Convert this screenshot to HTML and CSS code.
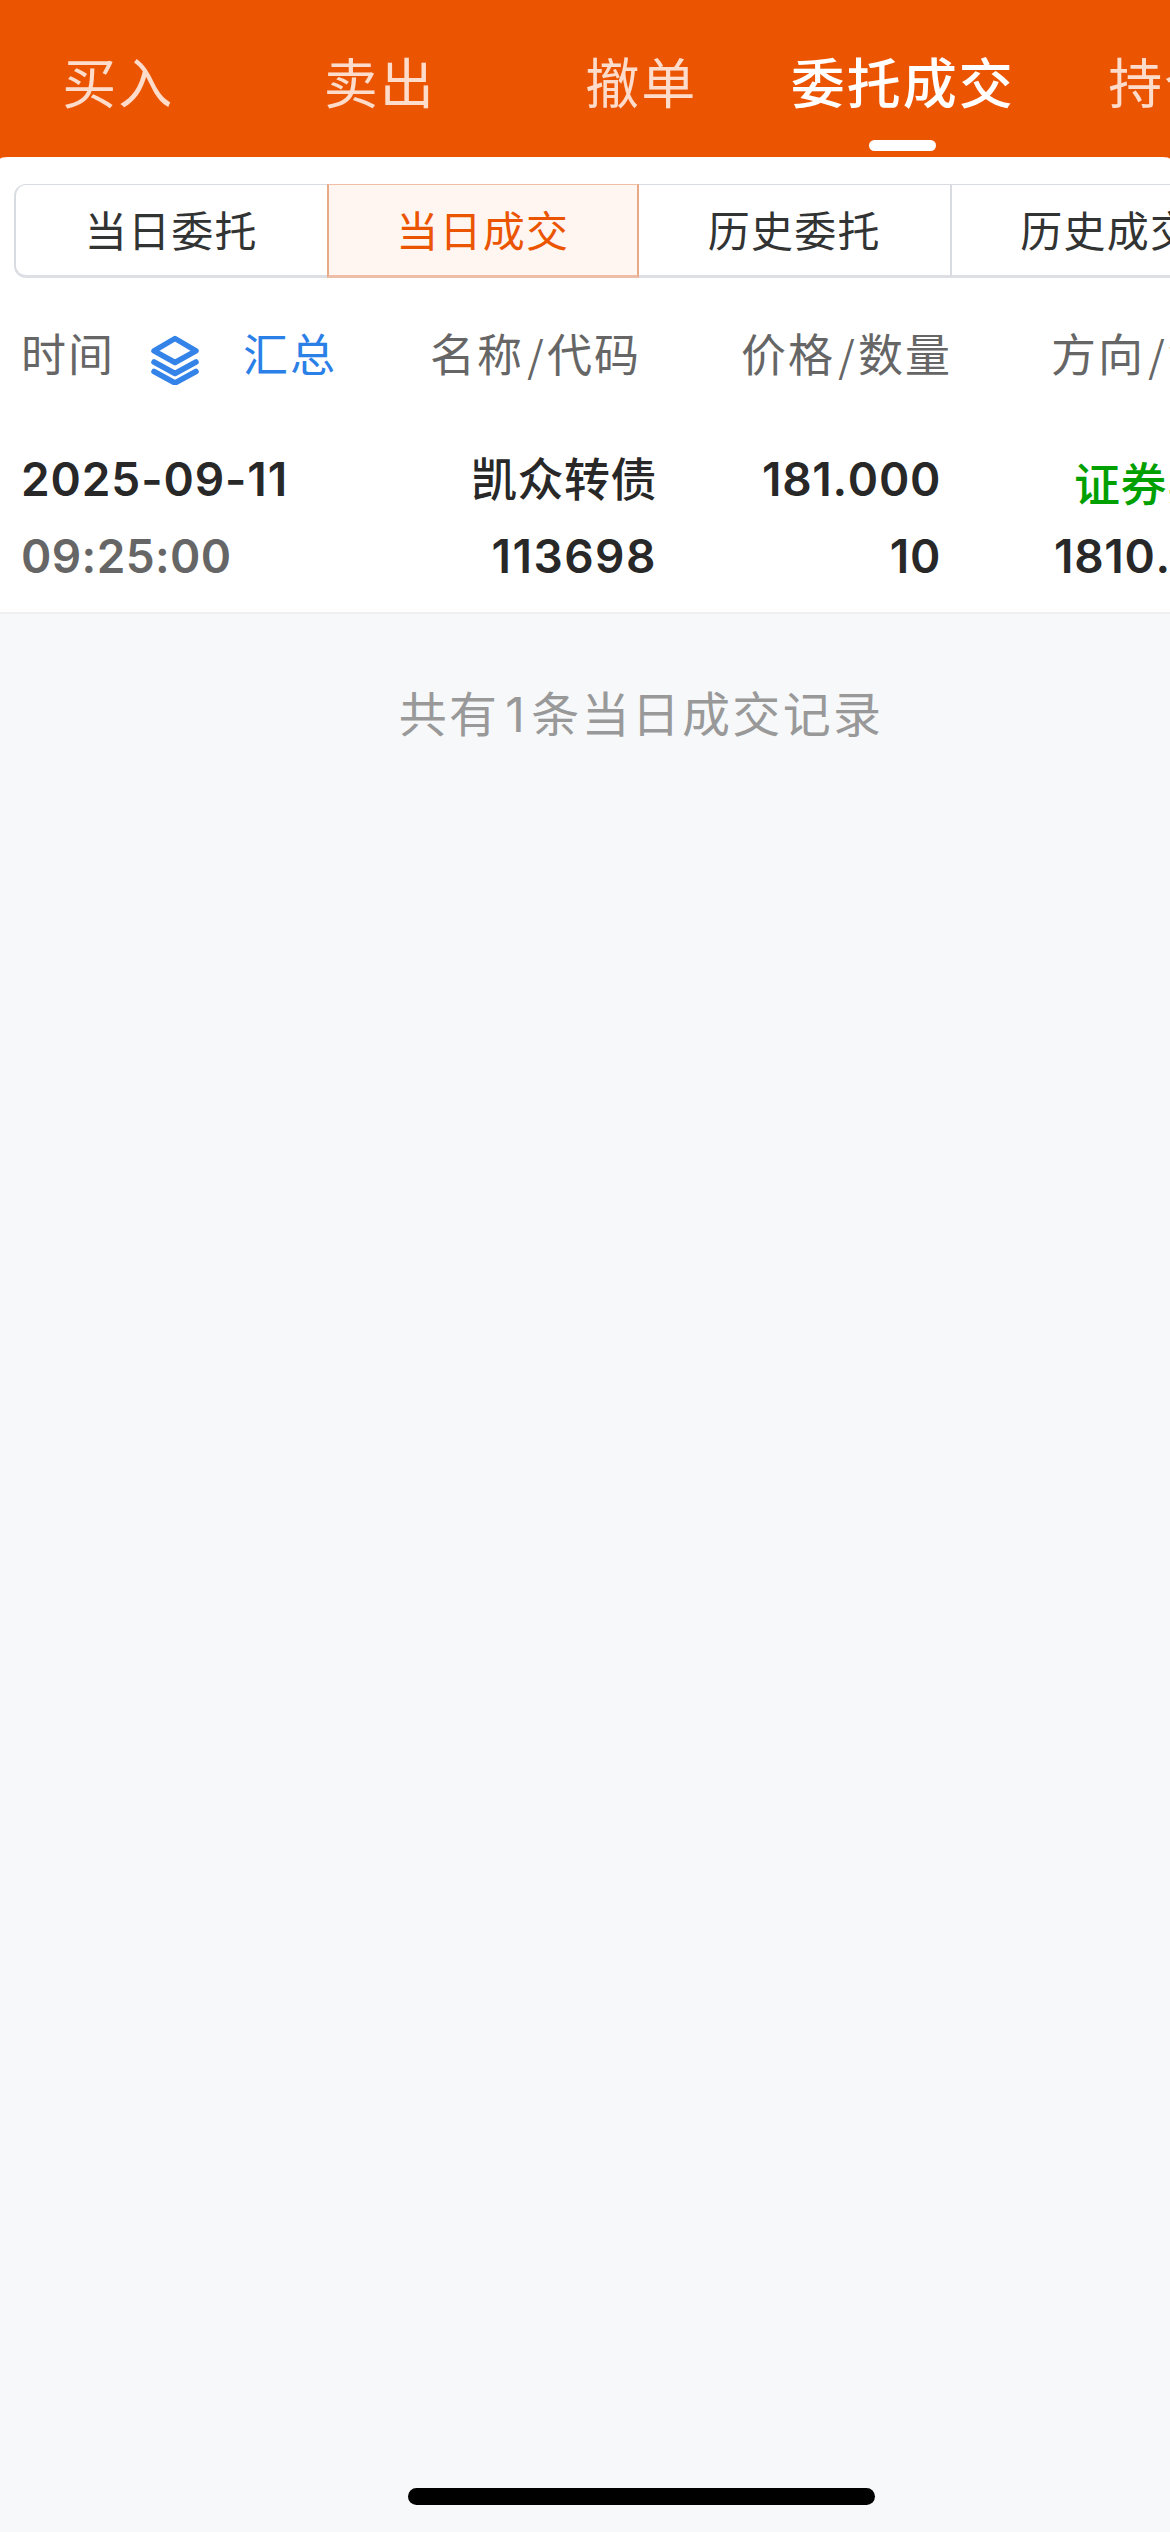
FILE: index.html
```html
<!DOCTYPE html>
<html lang="zh-CN">
<head>
<meta charset="utf-8">
<title>委托成交</title>
<link rel="stylesheet" href="styles.css">
</head>
<body>
<nav class="tabs">
  <a class="tab">买入</a>
  <a class="tab">卖出</a>
  <a class="tab">撤单</a>
  <a class="tab tab-active">委托成交</a>
  <a class="tab">持仓</a>
</nav>
<main class="panel">
  <div class="segments">
    <div class="segment">当日委托</div>
    <div class="segment segment-active">当日成交</div>
    <div class="segment">历史委托</div>
    <div class="segment">历史成交</div>
  </div>
  <div class="columns">
    <div class="time-head">
      <span>时间</span>
      <svg class="layers" viewBox="0 0 50 50">
        <path d="M25 3.5 46 15.8 25 27.5 4 15.8Z"/>
        <path d="M4 27 25 38.5 46 27"/>
        <path d="M4 36.5 25 48 46 36.5"/>
      </svg>
      <span class="summary">汇总</span>
    </div>
    <div>名称<i class="slash">/</i>代码</div>
    <div>价格<i class="slash">/</i>数量</div>
    <div>方向<i class="slash">/</i>金额</div>
  </div>
  <div class="record">
    <div class="cell cell-time"><span class="date">2025-09-11</span><span class="time">09:25:00</span></div>
    <div class="cell"><span class="name">凯众转债</span><span class="code">113698</span></div>
    <div class="cell"><span>181.000</span><span>10</span></div>
    <div class="cell"><span class="side">证券卖出</span><span>1810.000</span></div>
  </div>
</main>
<p class="total">共有<span class="count">1</span>条当日成交记录</p>
<footer class="home"><div class="home-bar"></div></footer>
</body>
</html>
```
FILE: styles.css
```css
* { box-sizing: border-box; }
body {
  margin: 0;
  width: 1170px;
  height: 2532px;
  overflow: hidden;
  display: flex;
  flex-direction: column;
  background: #f7f8fa;
  color: #282828;
  font-family: Inter, "Noto Sans CJK SC", sans-serif;
  white-space: nowrap;
}
.tabs {
  display: flex;
  height: 159px;
  padding-bottom: 2px;
  margin-bottom: -2px;
  flex: none;
  overflow: hidden;
  background: #eb5502;
}
.tab {
  flex: none;
  display: flex;
  flex-direction: column;
  align-items: center;
  justify-content: space-between;
  width: 261.5px;
  height: 157px;
  padding: 45px 0 6px;
  font-size: 54px;
  line-height: 80px;
  letter-spacing: 2px;
  color: #fddccb;
}
.tab:first-child { margin-left: -12.5px; }
.tab-active { color: #fff; font-weight: 500; }
.tab-active::after {
  content: "";
  width: 67px;
  height: 11px;
  border-radius: 5.5px;
  background: #fff;
}
.panel {
  flex: none;
  height: 457px;
  background: #fff;
  border-radius: 8px 8px 0 0 / 2px 2px 0 0;
  border-bottom: 2px solid #f0f0f0;
  overflow: hidden;
}
.segments {
  display: flex;
  width: 1250px;
  height: 94px;
  margin: 27px 0 0 14px;
}
.segment {
  width: 312.5px;
  padding-top: 16px;
  text-align: center;
  font-size: 42px;
  line-height: 62px;
  letter-spacing: 1.2px;
  color: #323333;
  border: 1px solid #d8dbe0;
  border-width: 1px 2px 3px 0;
  border-bottom-color: #dddfe4;
}
.segment:first-child { border-left-width: 2px; border-right-width: 0; border-radius: 12px 0 0 12px; }
.segment-active {
  color: #eb5502;
  background: #fff5f1;
  border-color: #f0bda5 #e8a987 #edbda8;
  border-left-width: 2px;
}
.columns {
  display: grid;
  grid-template-columns: 409px 311px 310px 230px;
  height: 154px;
  padding: 45px 0 0 21px;
  font-size: 45px;
  line-height: 66px;
  letter-spacing: 2px;
  color: #666;
}
.time-head { display: flex; align-items: center; height: 66px; }
.layers {
  width: 50px;
  height: 50px;
  margin: 8px 43px 0 35px;
  fill: none;
  stroke: #3483e8;
  stroke-width: 5.5;
  stroke-linecap: round;
  stroke-linejoin: round;
}
.summary { color: #2b80e8; }
.slash {
  display: inline-block;
  width: 23px;
  padding-left: 2px;
  text-align: center;
  font-size: 42px;
  font-style: normal;
  line-height: 60px;
  font-family: "Noto Sans CJK SC", sans-serif;
}
.record {
  display: grid;
  grid-template-columns: 367px 290px 284px 323px;
  padding-top: 14px;
}
.cell {
  display: flex;
  flex-direction: column;
  align-items: flex-end;
  gap: 10px;
  font-size: 46px;
  line-height: 67px;
  font-weight: 600;
  font-kerning: none;
  letter-spacing: .7px;
}
.cell-time { align-items: flex-start; padding-left: 21px; }
.date { letter-spacing: .9px; }
.time { color: #666; letter-spacing: .4px; }
.name { font-weight: 500; letter-spacing: .5px; }
.code { letter-spacing: 1.5px; }
.side { font-weight: 500; letter-spacing: .5px; color: #00a000; padding-right: 4px; position: relative; top: 5px; }
.total {
  margin: 66px 0 0;
  padding-left: 112px;
  text-align: center;
  font-size: 48px;
  line-height: 70px;
  letter-spacing: 2.3px;
  color: #999;
}
.count { margin: 0 4px 0 6px; }
.home { margin-top: auto; padding: 0 0 27px 408px; }
.home-bar { width: 467px; height: 17px; border-radius: 9px; background: #000; }
```
